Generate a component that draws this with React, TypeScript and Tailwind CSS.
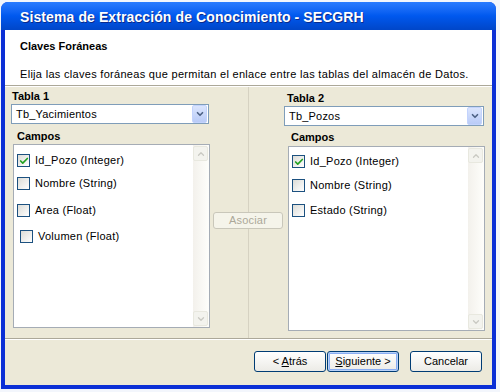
import { Check, ChevronDown, ChevronUp } from 'lucide-react';

const FONT = { fontFamily: '"Liberation Sans", Arial, sans-serif' };

interface Campo {
  name: string;
  checked?: boolean;
  gap: string;
  shift?: boolean;
}

const CAMPOS_1: Campo[] = [
  { name: 'Id_Pozo (Integer)', checked: true, gap: 'mt-[9px]' },
  { name: 'Nombre (String)', gap: 'mt-[10px]' },
  { name: 'Area (Float)', gap: 'mt-[14px]' },
  { name: 'Volumen (Float)', gap: 'mt-[13px]', shift: true },
];

const CAMPOS_2: Campo[] = [
  { name: 'Id_Pozo (Integer)', checked: true, gap: 'mt-[8px]' },
  { name: 'Nombre (String)', gap: 'mt-[11px]' },
  { name: 'Estado (String)', gap: 'mt-[12px]' },
];

export default function App() {
  return (
    <div className="w-[500px] h-[392px] bg-[#f3f6fc] pt-[2px] pl-[1px] overflow-hidden" style={FONT}>
      <div className="w-[495px] h-[387px] rounded-t-[7px] bg-[#0b2fd6] flex flex-col px-[4px] pb-[4px]">
        {/* Title bar */}
        <div className="-mx-[4px] h-[28px] rounded-t-[7px] bg-linear-to-b from-[#2a7cff] via-[#0058ee] to-[#0046c8] flex items-center pl-[19px] pt-[3px]">
          <span className="text-white text-[14px] font-bold tracking-[0.1px] [text-shadow:1px_1px_0_#0a2a8a]">
            Sistema de Extracción de Conocimiento - SECGRH
          </span>
        </div>

        <div className="flex-1 flex flex-col bg-[#ece9d8]">
          {/* Header */}
          <div className="h-[56px] bg-white pl-[15px] pt-[10px] border-b border-[#aca899]">
            <div className="text-[11px] font-bold text-black leading-[13px]">Claves Foráneas</div>
            <div className="text-[11px] text-black leading-[13px] mt-[15px] tracking-[0.3px]">
              Elija las claves foráneas que permitan el enlace entre las tablas del almacén de Datos.
            </div>
          </div>
          <div className="h-px bg-white" />

          {/* Body */}
          <div className="h-[252px] flex border-b border-[#aca899]">
            {/* Left */}
            <div className="w-[208px] pl-[6px] pt-[3px]">
              <div className="text-[11px] font-bold leading-[13px] pl-[1px]">Tabla 1</div>
              <Select value="Tb_Yacimientos" className="w-[198px] mt-[1px]" />
              <div className="text-[11px] font-bold leading-[13px] pl-[6px] mt-[6px]">Campos</div>
              <ListBox items={CAMPOS_1} className="w-[197px] h-[184px] ml-[2px] mt-[1px]" />
            </div>

            {/* Middle */}
            <div className="w-[70px] flex flex-col items-center">
              <div className="w-px h-[125px] bg-[#d6d2c2]" />
              <button className="w-[70px] h-[17px] rounded-[3px] border border-[#c9c7ba] bg-[#f5f4ea] text-[11px] text-[#aca899] leading-none tracking-[0.2px]">
                Asociar
              </button>
              <div className="w-px flex-1 bg-[#d6d2c2]" />
            </div>

            {/* Right */}
            <div className="flex-1 pl-[1px] pt-[5px]">
              <div className="text-[11px] font-bold leading-[13px] pl-[3px]">Tabla 2</div>
              <Select value="Tb_Pozos" className="w-[200px] mt-[1px]" />
              <div className="text-[11px] font-bold leading-[13px] pl-[7px] mt-[5px]">Campos</div>
              <ListBox items={CAMPOS_2} className="w-[197px] h-[185px] ml-[4px] mt-[2px]" />
            </div>
          </div>
          <div className="h-px bg-white" />

          {/* Footer */}
          <div className="flex-1 flex justify-end items-start pt-[11px] pr-[10px]">
            <WizButton label="< " mnemonic="A" rest="trás" className="w-[72px]" />
            <WizButton label="" mnemonic="S" rest="iguiente >" focused className="w-[72px] ml-[1px]" />
            <WizButton label="Cancelar" className="w-[72px] ml-[11px]" />
          </div>
        </div>
      </div>
    </div>
  );
}

function Select({ value, className }: { value: string; className: string }) {
  return (
    <div className={`h-[20px] border border-[#7f9db9] bg-white flex items-center ${className}`}>
      <span className="flex-1 text-[11px] pl-[4px] leading-none tracking-[0.2px]">{value}</span>
      <div className="w-[15px] h-[18px] mr-px rounded-[2px] bg-linear-to-b from-[#dbe5fd] to-[#b9cbf7] border border-[#c3d3fd] flex items-center justify-center">
        <ChevronDown className="w-[10px] h-[10px] text-[#4d6185]" strokeWidth={4} />
      </div>
    </div>
  );
}

function ListBox({ items, className }: { items: Campo[]; className: string }) {
  return (
    <div className={`border border-[#a5acb5] bg-white flex ${className}`}>
      <div className="flex-1 flex flex-col pl-[3px]">
        {items.map((it) => (
          <div key={it.name} className={`flex items-center h-[13px] ${it.gap} ${it.shift ? 'pl-[3px]' : ''}`}>
            <div className="w-[13px] h-[13px] border border-[#1c5180] bg-linear-to-br from-[#dcdcd7] to-white flex items-center justify-center">
              {it.checked && <Check className="w-[10px] h-[10px] text-[#21a121]" strokeWidth={4} />}
            </div>
            <span className="text-[11px] leading-none ml-[5px] text-black tracking-[0.25px]">{it.name}</span>
          </div>
        ))}
      </div>
      <div className="w-[16px] py-px pr-px flex flex-col justify-between bg-linear-to-r from-[#f3f1ec] to-[#fefefb]">
        <ScrollBtn up />
        <ScrollBtn />
      </div>
    </div>
  );
}

function ScrollBtn({ up }: { up?: boolean }) {
  const Icon = up ? ChevronUp : ChevronDown;
  return (
    <div className="w-[15px] h-[15px] rounded-[2px] border border-[#e8e8df] bg-[#f3f3ee] flex items-center justify-center">
      <Icon className="w-[10px] h-[10px] text-[#c9c9c2]" strokeWidth={3} />
    </div>
  );
}

function WizButton({
  label,
  mnemonic,
  rest,
  focused,
  className,
}: {
  label: string;
  mnemonic?: string;
  rest?: string;
  focused?: boolean;
  className: string;
}) {
  return (
    <button
      className={`h-[21px] rounded-[3px] border border-[#003c74] bg-linear-to-b from-white to-[#ecebe6] text-[11px] text-black leading-none ${
        focused ? 'shadow-[inset_0_0_0_1px_#b8d2f8,inset_0_0_0_2px_#89adf3]' : ''
      } ${className}`}
    >
      {label}
      {mnemonic && <span className="underline">{mnemonic}</span>}
      {rest}
    </button>
  );
}
